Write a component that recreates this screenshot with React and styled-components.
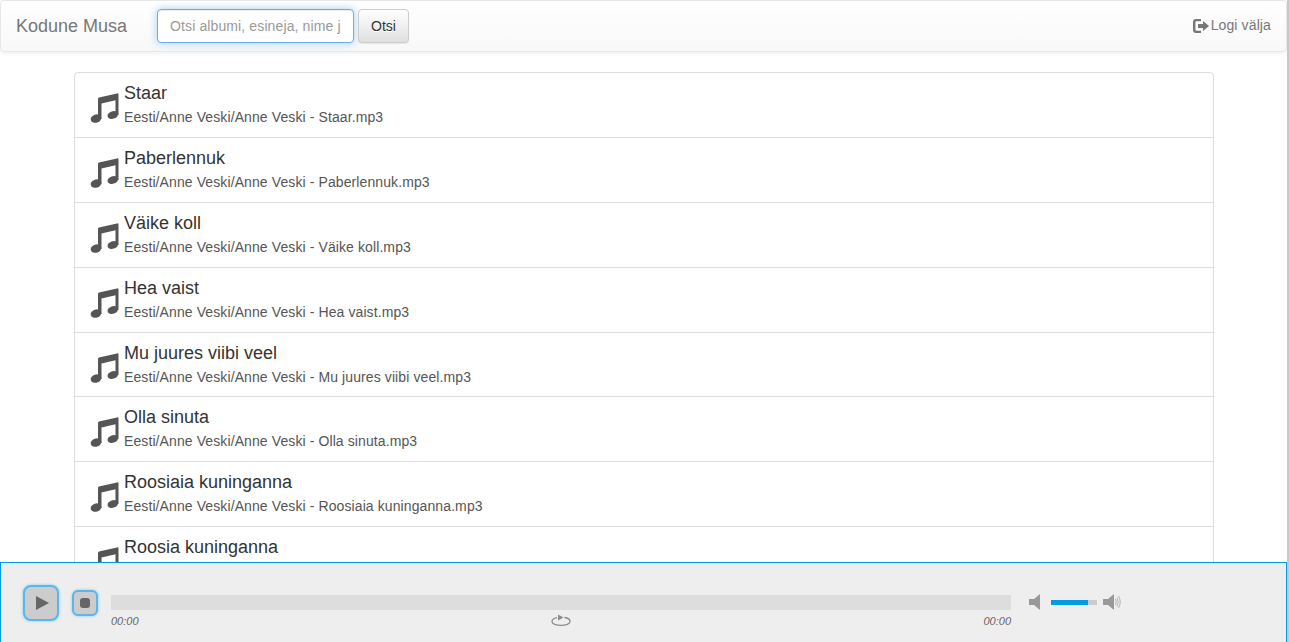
import React from 'react'
import styled, { createGlobalStyle } from 'styled-components'

const GlobalStyle = createGlobalStyle`
  html, body {
    margin: 0;
    height: 100%;
    overflow: hidden;
    background: #fff;
  }
  body {
    font-family: "Liberation Sans", Arial, sans-serif;
    font-size: 14px;
    line-height: 1.42857;
    color: #333;
  }
  * { box-sizing: border-box; }
`

const Navbar = styled.nav`
  display: flex;
  align-items: center;
  height: 52px;
  width: 1287px;
  margin-bottom: 20.4px;
  padding: 0 15px;
  background: linear-gradient(to bottom, #fff 0%, #f8f8f8 100%);
  border: 1px solid #e7e7e7;
  border-radius: 4px;
  box-shadow: inset 0 1px 0 rgba(255, 255, 255, .15), 0 1px 5px rgba(0, 0, 0, .075);
`

const Brand = styled.a`
  font-size: 18px;
  line-height: 20px;
  color: #777;
  width: 141px;
  text-shadow: 0 1px 0 rgba(255, 255, 255, .25);
`

const SearchInput = styled.input`
  width: 197px;
  height: 34px;
  padding: 6px 12px;
  font: 14px/20px "Liberation Sans", Arial, sans-serif;
  letter-spacing: .12px;
  color: #555;
  background: #fff;
  border: 1px solid #66afe9;
  border-radius: 4px;
  outline: 0;
  box-shadow: inset 0 1px 1px rgba(0, 0, 0, .075), 0 0 8px rgba(102, 175, 233, .6);

  &::placeholder {
    color: #999;
    opacity: 1;
  }
`

const SearchButton = styled.button`
  width: 51px;
  height: 34px;
  margin-left: 4px;
  padding: 0;
  font: 14px/20px "Liberation Sans", Arial, sans-serif;
  color: #333;
  background: linear-gradient(to bottom, #fff 0%, #e0e0e0 100%);
  background-color: #e0e0e0;
  border: 1px solid #ccc;
  border-radius: 4px;
  text-shadow: 0 1px 0 #fff;
  box-shadow: inset 0 1px 0 rgba(255, 255, 255, .15), 0 1px 1px rgba(0, 0, 0, .075);
`

const Logout = styled.a`
  display: flex;
  align-items: center;
  gap: 2px;
  margin-left: auto;
  letter-spacing: .12px;
  color: #777;
`

const Container = styled.main`
  width: 1140px;
  margin-left: 74px;
`

const SongList = styled.ul`
  display: block;
  margin: 0;
  padding: 0;
  list-style: none;
`

const SongRow = styled.li`
  display: flex;
  gap: 4px;
  height: 65.8px;
  margin-bottom: -1px;
  padding: 10px 15px;
  background: #fff;
  border: 1px solid #ddd;

  &:first-child {
    border-top-left-radius: 4px;
    border-top-right-radius: 4px;
  }
`

const NoteIcon = styled.svg`
  flex: none;
  width: 30px;
  height: 31px;
  margin-top: 10px;
  fill: #555;
`

const SongTitle = styled.h4`
  margin: 0 0 4.2px;
  padding-top: 1px;
  font-size: 18px;
  font-weight: 500;
  line-height: 1.1;
  color: #333;
`

const SongPath = styled.p`
  margin: 0;
  letter-spacing: .1px;
  color: #555;
`

const Player = styled.section`
  position: fixed;
  left: 0;
  right: 2px;
  bottom: -1px;
  height: 81px;
  display: flex;
  padding: 22px 0 0 22px;
  background: #eee;
  border: 1px solid #009be3;
`

const ScrollEdge = styled.div`
  position: fixed;
  top: 0;
  right: 0;
  bottom: 0;
  width: 2px;
  background: #c8c8c8;
`

const PlayerButton = styled.button`
  flex: none;
  display: flex;
  align-items: center;
  justify-content: center;
  width: ${p => p.$size}px;
  height: ${p => p.$size}px;
  margin: ${p => p.$top}px ${p => p.$right}px 0 0;
  padding: 0;
  background: #ccc;
  border: 2px solid #5cb6ea;
  border-radius: ${p => p.$radius}px;
  box-shadow: 0 0 3px #7cc6f0;
`

const PlayGlyph = styled.span`
  width: 0;
  height: 0;
  margin-left: 2px;
  border-style: solid;
  border-width: 7.5px 0 7.5px 13px;
  border-color: transparent transparent transparent #666;
`

const StopGlyph = styled.span`
  width: 10px;
  height: 10px;
  background: #666;
  border-radius: 3px;
`

const Timeline = styled.div`
  flex: none;
  width: 900px;
  padding-top: 10px;
`

const ProgressTrack = styled.div`
  height: 15px;
  background: #ddd;
`

const TimeRow = styled.div`
  display: flex;
  align-items: flex-start;
  justify-content: space-between;
  margin-top: 4px;
`

const TimeLabel = styled.span`
  width: 60px;
  font-size: 11px;
  font-style: italic;
  line-height: 15px;
  color: #666;
  text-align: ${p => (p.$right ? 'right' : 'left')};
`

const RepeatIcon = styled.svg`
  width: 20px;
  height: 14px;
  fill: none;
  stroke: #8c8c8c;
`

const VolumeBox = styled.div`
  display: flex;
  align-items: center;
  height: 16px;
  margin: 9px 0 0 18px;
`

const VolumeTrack = styled.div`
  width: 46px;
  height: 5px;
  margin: 0 6px 0 9px;
  background: #ccc;
`

const VolumeFill = styled.div`
  height: 100%;
  background: #009be3;
`

const songs = [
  'Staar',
  'Paberlennuk',
  'Väike koll',
  'Hea vaist',
  'Mu juures viibi veel',
  'Olla sinuta',
  'Roosiaia kuninganna',
  'Roosia kuninganna',
]

const Note = () => (
  <NoteIcon viewBox="0 0 30 31">
    <path d="M8 6 Q8 5 9 4.6 L27 0.4 Q28.5 0.2 28.5 1.5 V22 H25.5 V7.2 L11.5 10.6 V26 H8 Z" />
    <ellipse cx="6" cy="25.6" rx="5.4" ry="4.1" transform="rotate(-18 6 25.6)" />
    <ellipse cx="22.8" cy="22" rx="5.4" ry="3.8" transform="rotate(-18 22.8 22)" />
  </NoteIcon>
)

const LogoutIcon = () => (
  <svg width="16" height="14" viewBox="0 0 16 14" fill="#777">
    <path d="M3 0 H8 V2.2 H3.4 Q2.4 2.2 2.4 3.2 V10.8 Q2.4 11.8 3.4 11.8 H8 V14 H3 Q0 14 0 11 V3 Q0 0 3 0 Z" />
    <path d="M5 5 H10 V2 L16 7 L10 12 V9 H5 Z" />
  </svg>
)

const Speaker = ({ loud }) => (
  <svg width={loud ? 19 : 13} height="16" viewBox={loud ? '0 0 19 16' : '0 0 13 16'} fill="#999">
    <path d="M0 5 H5 L11 0 V16 L5 11 H0 Z" />
    {loud && (
      <g fill="none" stroke="#b4b4b4" strokeWidth="1">
        <path d="M12.5 5 Q14 8 12.5 11" />
        <path d="M14 3.5 Q16.5 8 14 12.5" />
        <path d="M15.5 2 Q19 8 15.5 14" />
      </g>
    )}
  </svg>
)

const App = () => (
  <>
    <GlobalStyle />
    <Navbar>
      <Brand>Kodune Musa</Brand>
      <SearchInput placeholder="Otsi albumi, esineja, nime järgi" />
      <SearchButton>Otsi</SearchButton>
      <Logout>
        <LogoutIcon />
        Logi välja
      </Logout>
    </Navbar>
    <Container>
      <SongList>
        {songs.map(song => (
          <SongRow key={song}>
            <Note />
            <div>
              <SongTitle>{song}</SongTitle>
              <SongPath>Eesti/Anne Veski/Anne Veski - {song}.mp3</SongPath>
            </div>
          </SongRow>
        ))}
      </SongList>
    </Container>
    <Player>
      <PlayerButton $size={36} $top={0} $right={13} $radius={8}>
        <PlayGlyph />
      </PlayerButton>
      <PlayerButton $size={26} $top={5} $right={13} $radius={6}>
        <StopGlyph />
      </PlayerButton>
      <Timeline>
        <ProgressTrack />
        <TimeRow>
          <TimeLabel>00:00</TimeLabel>
          <RepeatIcon viewBox="0 0 20 14">
            <path d="M6 3.6 C3 4.2 1 5.6 1 7.4 C1 9.8 5 11.4 10 11.4 C15 11.4 19 9.8 19 7.4 C19 5.4 16.4 3.9 13.5 3.5" strokeWidth="1.3" />
            <path d="M7 0.5 L12.5 3.5 L7 6.5 Z" fill="#8c8c8c" stroke="none" />
          </RepeatIcon>
          <TimeLabel $right>00:00</TimeLabel>
        </TimeRow>
      </Timeline>
      <VolumeBox>
        <Speaker />
        <VolumeTrack>
          <VolumeFill style={{ width: '80%' }} />
        </VolumeTrack>
        <Speaker loud />
      </VolumeBox>
    </Player>
    <ScrollEdge />
  </>
)

export default App
